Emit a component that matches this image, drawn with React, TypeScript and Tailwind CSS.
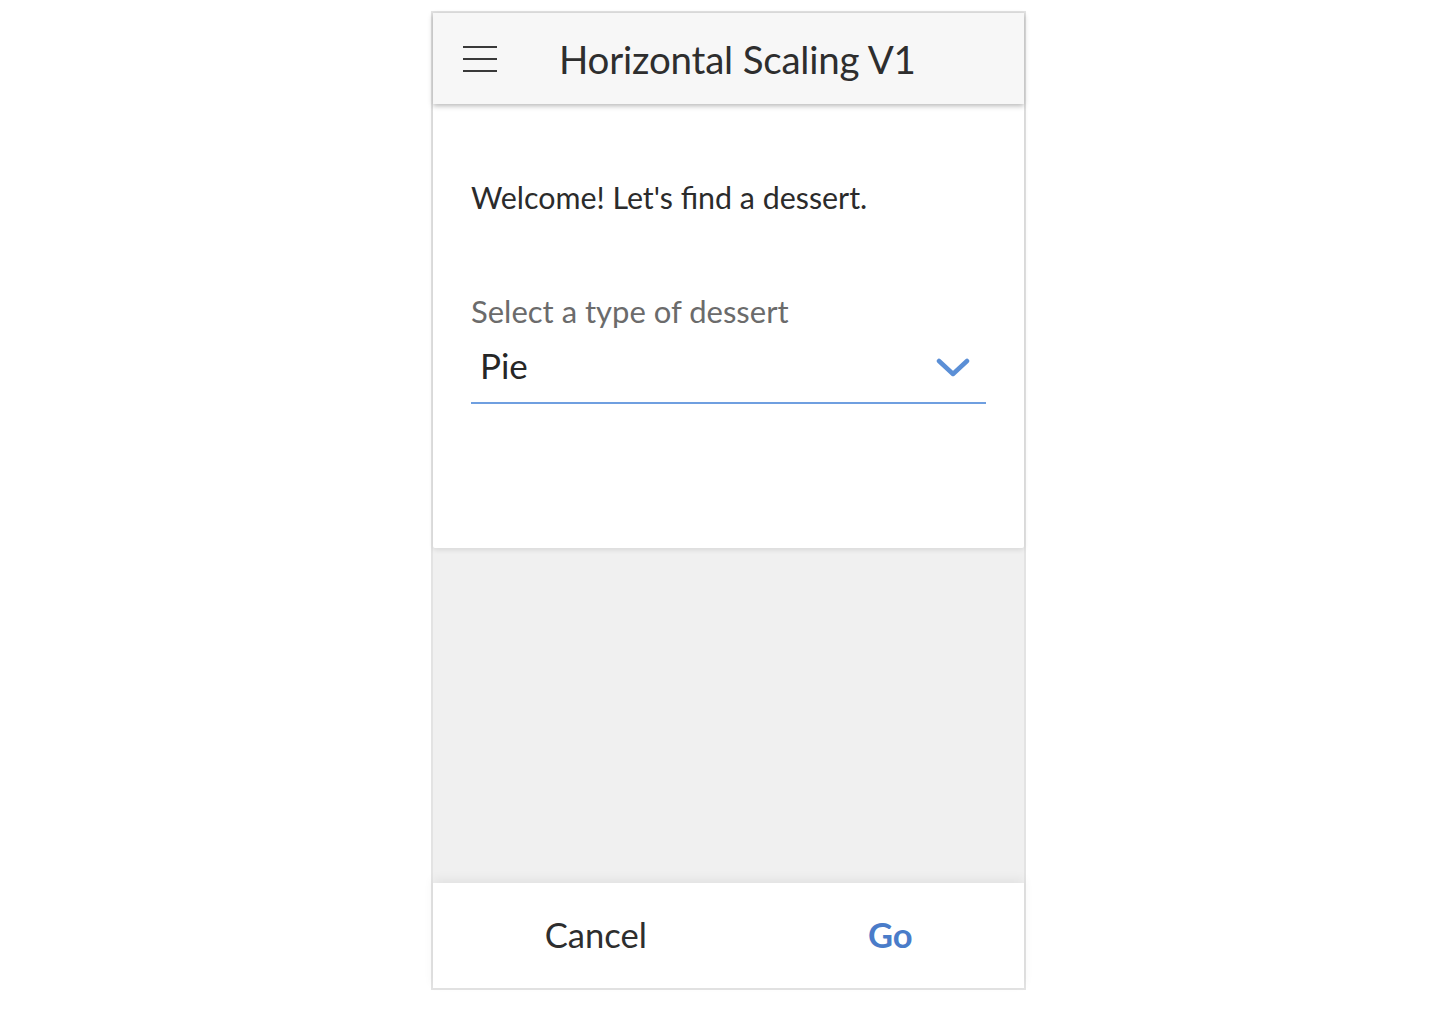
import React from "react";

export default function App() {
  return (
    <div className="w-[1434px] h-[1016px] bg-white flex justify-start pt-[11px] pl-[431px]" style={{ fontFamily: "Lato, 'Noto Sans', sans-serif" }}>
      <div className="w-[595px] h-[979px] border-2 border-[#e3e3e3] flex flex-col bg-[#f0f0f0]">
        <header className="relative z-20 h-[91px] shrink-0 bg-[#f7f7f7] flex items-center shadow-[0_2px_5px_rgba(0,0,0,0.28)]">
          <div className="ml-[30px] w-[34px] flex flex-col gap-[10px]">
            <div className="h-[2px] bg-[#3a3a3a]" />
            <div className="h-[2px] bg-[#3a3a3a]" />
            <div className="h-[2px] bg-[#3a3a3a]" />
          </div>
          <h1 className="ml-[62px] mt-[2px] text-[38.5px] text-[#2e2e2e] leading-none tracking-[-0.2px]">Horizontal Scaling V1</h1>
        </header>
        <main className="relative z-10 h-[444px] shrink-0 bg-white px-[38px] pt-[75px] shadow-[0_2px_5px_rgba(0,0,0,0.10)] rounded-b-[2px]">
          <p className="text-[30.4px] text-[#2b2b2b] leading-[36px]">Welcome! Let's find a dessert.</p>
          <div className="mt-[78px]">
            <div className="text-[31px] text-[#6b6b6b] leading-[36px]">Select a type of dessert</div>
            <div className="mt-[15px] flex items-center justify-between border-b-2 border-[#6f9fe0] pl-[9px] pr-[16px] h-[60px] pb-[16px]">
              <span className="text-[35px] text-[#262626] leading-none">Pie</span>
              <svg width="34" height="22" viewBox="0 0 34 22" className="mt-[6px]">
                <path d="M3 4 L17 17 L31 4" fill="none" stroke="#5b8fd6" strokeWidth="4.5" strokeLinecap="round" strokeLinejoin="round" />
              </svg>
            </div>
          </div>
        </main>
        <div className="flex-1" />
        <footer className="h-[105px] shrink-0 bg-white flex items-center shadow-[0_-4px_10px_rgba(0,0,0,0.06)]">
          <div className="w-1/2 flex justify-center">
            <span className="text-[34.6px] text-[#2e2e2e] leading-none ml-[30px]">Cancel</span>
          </div>
          <div className="w-1/2 flex justify-center">
            <span className="text-[34.5px] font-bold text-[#4a7cc9] leading-none mr-[-28px]">Go</span>
          </div>
        </footer>
      </div>
    </div>
  );
}
